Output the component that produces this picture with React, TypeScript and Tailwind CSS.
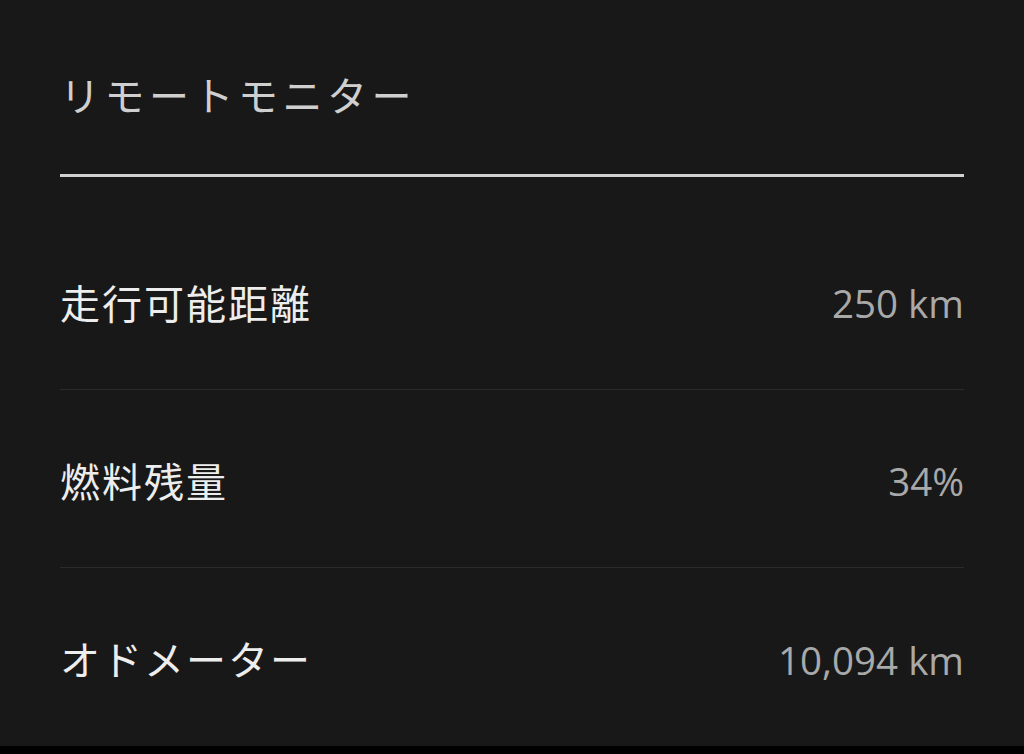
export default function App() {
  const rows = [
    { label: '走行可能距離', value: '250 km' },
    { label: '燃料残量', value: '34%' },
    { label: 'オドメーター', value: '10,094 km' },
  ]

  return (
    <div className="w-[1024px] h-[754px] bg-black">
      <div className="h-[746px] bg-[#181818] px-[60px] flex flex-col">
        {/* header */}
        <div className="h-[177px] flex items-center pt-[14px]">
          <h1 className="text-[40px] leading-none tracking-[4.5px] font-normal text-[#cfcfcf] font-['Noto_Sans_CJK_JP',sans-serif]">
            リモートモニター
          </h1>
        </div>
        <div className="h-[3px] bg-[#d0d0d0]" />

        {/* rows */}
        <div className="pt-[35px] flex flex-col">
          {rows.map((r, i) => (
            <div
              key={r.label}
              className={`h-[178px] pt-[2px] flex items-center justify-between ${i < rows.length - 1 ? 'border-b border-[#2b2b2b]' : ''}`}
            >
              <span className="text-[40px] leading-none tracking-[2px] text-[#ededed] font-['Noto_Sans_CJK_JP',sans-serif]">
                {r.label}
              </span>
              <span className="text-[38.5px] leading-none text-[#a9a9a9] font-['Open_Sans',sans-serif] pt-[4px]">
                {r.value}
              </span>
            </div>
          ))}
        </div>
      </div>
    </div>
  )
}
